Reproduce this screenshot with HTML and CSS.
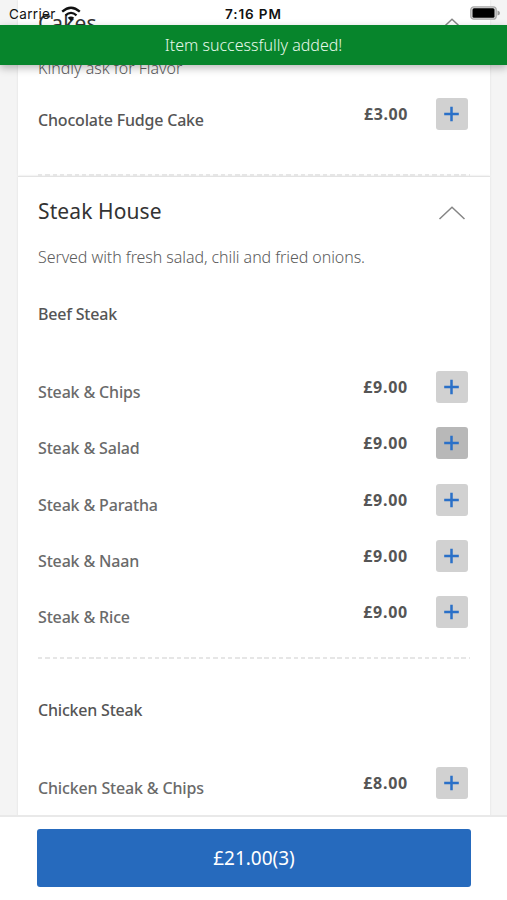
FILE: index.html
```html
<!DOCTYPE html>
<html lang="en">
<head>
<meta charset="utf-8">
<title>Menu</title>
<link rel="stylesheet" href="styles.css">
</head>
<body>
<svg class="defs" width="0" height="0"><defs>
<symbol id="plus" viewBox="0 0 32 32"><path d="M15.500 8.700v14.600M8.200 16h14.600" fill="none" stroke="#2a70c8" stroke-width="2.500"/></symbol>
<symbol id="chevron" viewBox="0 0 28 16"><path d="M1.500 14 14 2.300 26.500 14" fill="none" stroke="#858585" stroke-width="1.500"/></symbol>
</defs></svg>
<main class="menu">
  <section class="card cakes">
    <header class="head"><h2 class="title">Cakes</h2><svg class="chevron"><use href="#chevron"/></svg></header>
    <p class="note flavor">Kindly ask for Flavor</p>
    <div class="row"><span class="name">Chocolate Fudge Cake</span><span class="price three">£3.00</span><button class="add" aria-label="Add"><svg><use href="#plus"/></svg></button></div>
    <hr class="rule">
  </section>
  <section class="card steak">
    <header class="head"><h2 class="title">Steak House</h2><svg class="chevron"><use href="#chevron"/></svg></header>
    <p class="note">Served with fresh salad, chili and fried onions.</p>
    <h3 class="group">Beef Steak</h3>
    <div class="row"><span class="name light">Steak &amp; Chips</span><span class="price">£9.00</span><button class="add" aria-label="Add"><svg><use href="#plus"/></svg></button></div>
    <div class="row"><span class="name light">Steak &amp; Salad</span><span class="price">£9.00</span><button class="add pressed" aria-label="Add"><svg><use href="#plus"/></svg></button></div>
    <div class="row"><span class="name light">Steak &amp; Paratha</span><span class="price">£9.00</span><button class="add" aria-label="Add"><svg><use href="#plus"/></svg></button></div>
    <div class="row"><span class="name light">Steak &amp; Naan</span><span class="price">£9.00</span><button class="add" aria-label="Add"><svg><use href="#plus"/></svg></button></div>
    <div class="row"><span class="name light">Steak &amp; Rice</span><span class="price">£9.00</span><button class="add" aria-label="Add"><svg><use href="#plus"/></svg></button></div>
    <hr class="rule between">
    <h3 class="group">Chicken Steak</h3>
    <div class="row"><span class="name light">Chicken Steak &amp; Chips</span><span class="price">£8.00</span><button class="add" aria-label="Add"><svg><use href="#plus"/></svg></button></div>
  </section>
</main>
<footer class="footer"><button class="basket"><span>£21.00(3)</span></button></footer>
<div class="status">
  <span class="carrier">Carrier</span>
  <svg class="wifi" viewBox="0 0 20 16"><g fill="none" stroke="#111" stroke-width="2.300"><path d="M1.200 5.600Q10-2.200 18.800 5.600"/><path d="M4.500 9.300Q10 4.400 15.500 9.300"/></g><path d="M6.800 11.800Q10 9 13.200 11.800L10 15.200Z" fill="#111"/></svg>
  <time class="time">7:16 PM</time>
  <svg class="battery" viewBox="0 0 31 14"><rect x=".8" y=".8" width="25.400" height="12.400" rx="3" fill="#ddd" stroke="#aaa" stroke-width="1.300"/><rect x="2.500" y="2.200" width="22" height="9.600" rx="1.500"/><path d="M27.500 4.500Q30 5 30 7T27.500 9.500Z" fill="#999"/></svg>
</div>
<div class="toast"><span>Item successfully added!</span></div>
</body>
</html>
```
FILE: styles.css
```css
* { box-sizing: border-box; }
body { margin: 0; width: 507px; height: 900px; overflow: hidden; position: relative; display: flex; flex-direction: column; background: #fff; font-family: "Noto Sans", "Open Sans", sans-serif; color: #555; }
.defs { position: absolute; }
h2, h3, p { margin: 0; font-weight: 400; white-space: nowrap; }
button { border: 0; padding: 0; font: inherit; }
.menu { height: 815px; overflow: hidden; background: #f4f4f4; padding: 0 17px 0 18px; }
.card { background: #fff; padding: 0 20px; box-shadow: 0 0 2px #dedede; }
.cakes { height: 175.500px; display: flex; flex-direction: column; }
.steak { height: 700px; border-top: 1px solid #e3e3e3; }
.head { display: flex; justify-content: space-between; align-items: center; }
.title { font-size: 21px; line-height: 30px; letter-spacing: .1px; color: #333; }
.chevron { width: 28px; height: 16px; margin-right: 4px; }
.cakes .head { padding-top: 5px; height: 40px; }
.cakes .chevron { margin-top: 4px; }
.steak .head { padding-top: 18px; height: 50px; }
.steak .chevron { margin-top: 4px; }
.note { font-size: 16px; line-height: 24px; color: #5c5c5c; font-weight: 300; letter-spacing: -.07px; }
.flavor { letter-spacing: 0; }
.cakes .note { margin: 16.400px 0 18.100px; }
.steak .note { margin-top: 18.500px; }
.group { font-size: 16px; line-height: 24px; font-weight: 500; letter-spacing: -.2px; margin: 33px 0 45px; }
.row { height: 56.250px; display: flex; align-items: flex-start; }
.name { flex: 1; padding-top: 9px; font-size: 16px; line-height: 24px; font-weight: 500; letter-spacing: -.19px; white-space: nowrap; }
.cakes .name { padding-top: 9.500px; }
.light { color: #6a6a6a; letter-spacing: -.16px; }
.price { font-size: 16px; line-height: 33px; font-weight: 700; letter-spacing: .75px; margin-right: 27.500px; }
.three { letter-spacing: .6px; }
.add { width: 32px; height: 32px; margin-right: 2.500px; background: #d1d1d1; border-radius: 3px; }
.add svg { display: block; width: 32px; height: 32px; }
.pressed { background: #b8b8b8; }
.rule { width: 432px; height: 2px; margin: 0; border: 0; flex: none; background: repeating-linear-gradient(90deg, #e6e6e6 0 4.500px, transparent 4.500px 7.300px); }
.cakes .rule { margin-top: auto; }
.between { margin-top: 4.500px; }
.between + .group { margin-top: 39.500px; }
.footer { height: 85px; border-top: 2px solid #e9e9e9; padding: 12px 36px 0 37px; }
.basket { display: block; width: 434px; height: 58px; border-radius: 3px; background: #266abd; color: #fff; font-size: 19px; line-height: 58px; letter-spacing: -.03px; }
.status { position: absolute; inset: 0 0 auto; height: 26px; font-family: Inter, sans-serif; color: #111; }
.carrier { position: absolute; left: 9px; top: 5px; font-size: 13.500px; line-height: 18px; letter-spacing: .35px; }
.wifi { position: absolute; left: 61px; top: 6px; width: 20px; height: 16px; }
.time { position: absolute; left: 225px; top: 5px; font-size: 13.500px; line-height: 18px; font-weight: 600; letter-spacing: .9px; }
.battery { position: absolute; left: 470px; top: 6px; width: 31px; height: 14px; }
.toast { position: absolute; left: 0; right: 0; top: 25px; height: 39.500px; background: #07852c; color: #e6f8ea; text-align: center; font-size: 16px; font-weight: 300; line-height: 40px; box-shadow: 0 3px 8px rgba(0,0,0,.28); }
```
